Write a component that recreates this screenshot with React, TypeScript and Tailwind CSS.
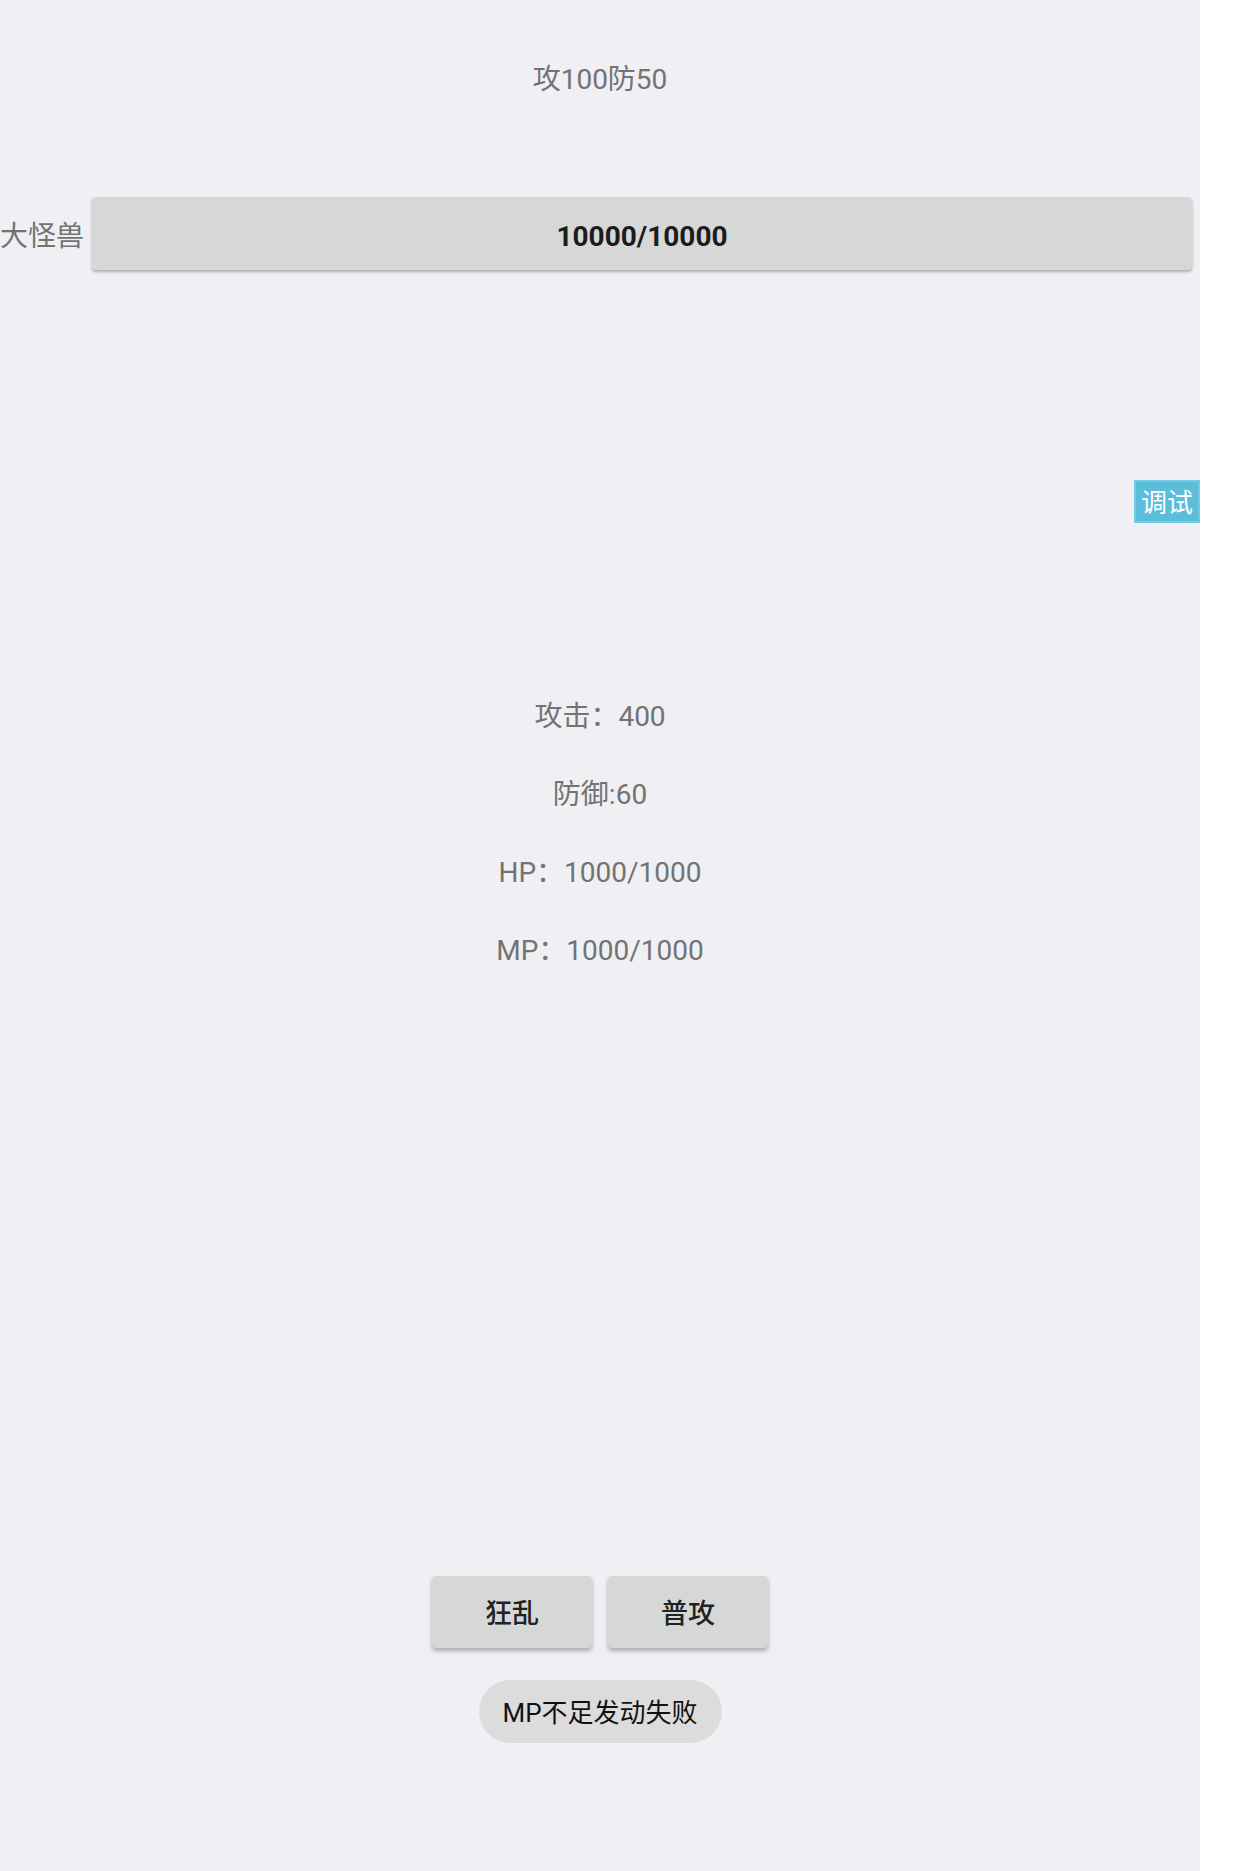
const font = 'font-[Roboto,"Noto_Sans_CJK_SC",sans-serif]';

const stats = ['攻击：400', '防御:60', 'HP：1000/1000', 'MP：1000/1000'];

const App = () => {
  return (
    <div className={`flex min-h-[1871px] w-[1243px] bg-white ${font}`}>
      {/* Main game panel */}
      <div className="flex w-[1200px] flex-col bg-[#efeff4]">
        {/* Boss stats */}
        <div className="flex h-[158px] items-center justify-center pt-[2px] text-[28px] text-[#737373]">
          攻100防50
        </div>

        {/* Boss HP bar */}
        <div className="mt-[39px] flex h-[73px] items-center pr-[8px]">
          <span className="w-[92px] whitespace-nowrap pt-[6px] text-[28px] text-[#737373]">大怪兽</span>
          <div className="flex h-full flex-1 items-center justify-center rounded-[4px] bg-[#d6d7d7] pt-[6px] shadow-[0_2px_3px_rgba(0,0,0,0.28)]">
            <span className="text-[28px] font-bold text-[#1c1c1c]">10000/10000</span>
          </div>
        </div>

        {/* Debug button */}
        <div className="mt-[210px] flex justify-end">
          <button className="flex h-[43px] w-[66px] items-center justify-center border-2 border-[#6fcbe6] bg-[#5bbdd9] pt-[3px] text-[26px] leading-none text-white">
            调试
          </button>
        </div>

        {/* Player stats */}
        <div className="mt-[155px] flex flex-col">
          {stats.map((s) => (
            <div key={s} className="flex h-[78px] items-center justify-center text-[28px] text-[#737373]">
              {s}
            </div>
          ))}
        </div>

        {/* Actions */}
        <div className="mt-[586px] flex justify-center gap-[16px]">
          <button className="h-[72px] w-[160px] rounded-[4px] bg-[#d6d7d7] pt-[4px] text-[27px] font-medium text-[#222] shadow-[0_3px_4px_rgba(0,0,0,0.28)]">
            狂乱
          </button>
          <button className="h-[72px] w-[160px] rounded-[4px] bg-[#d6d7d7] pt-[4px] text-[27px] font-medium text-[#222] shadow-[0_3px_4px_rgba(0,0,0,0.28)]">
            普攻
          </button>
        </div>

        {/* Toast */}
        <div className="mt-[32px] flex justify-center">
          <div className="flex h-[63px] w-[243px] items-center justify-center rounded-full bg-[#dcdcdc] pt-[4px] text-[26px] text-[#111]">
            MP不足发动失败
          </div>
        </div>
      </div>
    </div>
  );
};

export default App;
